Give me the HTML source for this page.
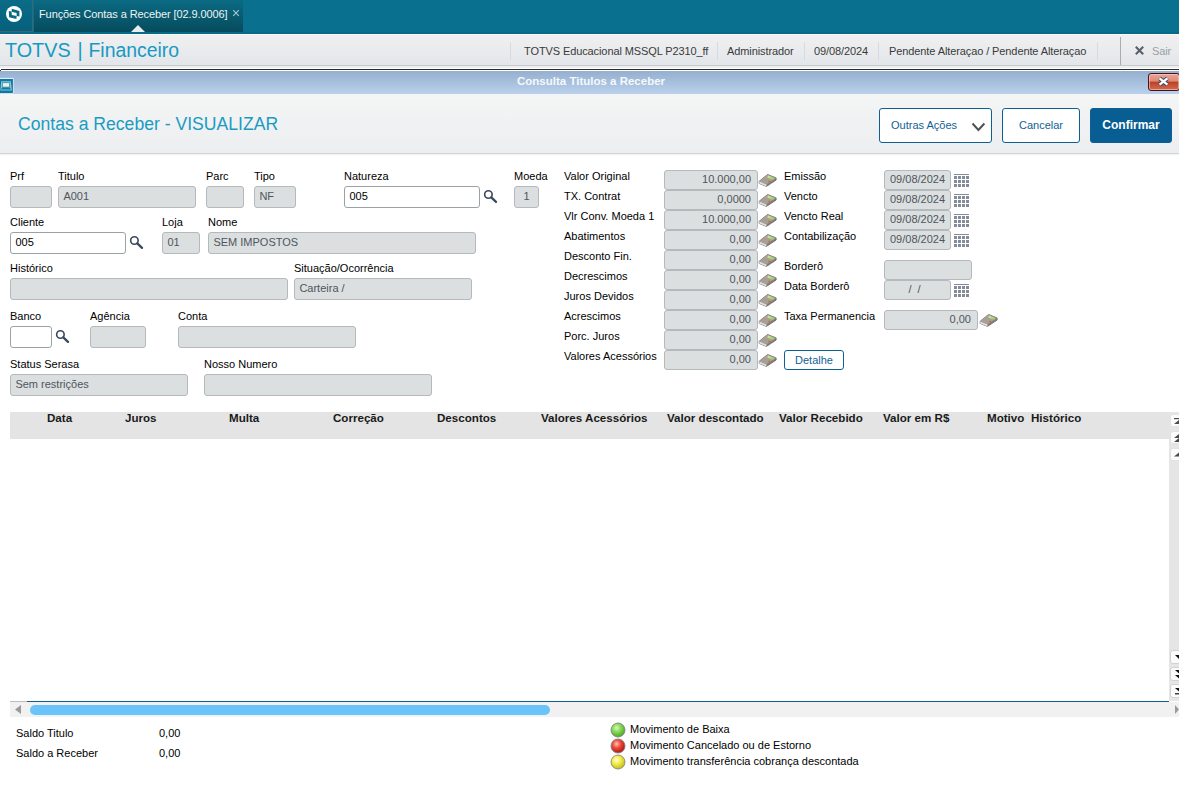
<!DOCTYPE html>
<html><head><meta charset="utf-8">
<style>
*{box-sizing:border-box;margin:0;padding:0}
html,body{width:1179px;height:798px;overflow:hidden;background:#fff;font-family:"Liberation Sans",sans-serif;}
.a{position:absolute}
.t{position:absolute;white-space:pre;font-size:11px;color:#000;line-height:13px}
#top{left:0;top:0;width:1179px;height:34px;background:#0a7090}
#topstrip{left:0;top:32px;width:1179px;height:2px;background:#066a88}
#logo{left:0;top:0;width:33px;height:32px;background:linear-gradient(#0b6c87,#05607c);border-right:1px solid #3e6671;border-bottom:1px solid #3e6671}
#tab{left:34px;top:0;width:209px;height:32px;background:linear-gradient(#0b6b83,#064b5d)}
#wl{left:0;top:34px;width:1179px;height:1px;background:#fbf7f5}
#hdr{left:0;top:35px;width:1179px;height:30px;background:linear-gradient(#f0f0f1,#e3e6ea)}
.sep{position:absolute;width:1px;background:#d8dbdd}
.ht{position:absolute;white-space:pre;font-size:11px;letter-spacing:-0.1px;color:#3a3a3a;line-height:13px;top:45px}
#title{left:0;top:71px;width:1179px;height:23px;background:linear-gradient(#95afcf,#b9d1eb)}
#panel{left:0;top:94px;width:1179px;height:60px;background:linear-gradient(#f4f5f4,#eceef1);border-bottom:1px solid #d3d5d7;box-shadow:0 1px 1px rgba(0,0,0,0.05)}
.btn{position:absolute;border:1px solid #0f5f95;border-radius:3px;background:#fff;color:#0f5f95;font-size:11px;line-height:33px;text-align:center}
.f{position:absolute;height:22px;border:1px solid #b4b9bc;border-radius:3px;background:#dcdfe0;font-size:11px;color:#4e565c;line-height:19px;padding-left:4.4px;white-space:pre}
.fe{background:#fff;border-color:#9aa2a6;color:#000}
.v{position:absolute;height:20px;border:1px solid #b4b9bc;border-radius:3px;background:#dcdfe0;font-size:11px;color:#4e565c;line-height:17px;padding-right:6px;text-align:right;white-space:pre}
.sbb{position:absolute;left:1170px;width:11px;height:13px;background:#fbfbfb;border-radius:3px;border:1px solid #e2e2e2}
.sbd{height:14px;border-color:#d2d2d2}
.gh{position:absolute;white-space:pre;font-size:11.6px;font-weight:bold;color:#1a1a1a;top:411px;line-height:14px}
</style></head><body>
<svg width="0" height="0" style="position:absolute"><defs>
<symbol id="calc" viewBox="0 0 20 15"><defs><linearGradient id="scr" x1="0" y1="0" x2="1" y2="1"><stop offset="0" stop-color="#d6f4a8"/><stop offset="1" stop-color="#86c84c"/></linearGradient></defs><polygon points="1.2,8.25 9.65,1.5 18.1,4.9 18.1,7.05 8.45,13.4 1.2,10.4" fill="#8a7d70" stroke="#6e6e72" stroke-width="0.9" stroke-linejoin="round"/><polygon points="1.2,8.25 8.45,11.3 8.45,13.4 1.2,10.4" fill="#dedce4"/><polygon points="1.2,8.25 9.65,1.5 18.1,4.9 8.45,11.3" fill="#a99f94"/><polygon points="9.95,2.5 16.3,5.2 15.1,7.05 9.35,4.6" fill="url(#scr)"/><circle cx="11.2" cy="8.5" r="0.7" fill="#d0482e"/></symbol>
<symbol id="cal" viewBox="0 0 17 15"><rect x="1" y="1" width="15" height="1" fill="#848c9a"/><g fill="#848c9a"><rect x="1" y="3" width="3" height="3"/><rect x="5" y="3" width="3" height="3"/><rect x="9" y="3" width="3" height="3"/><rect x="13" y="3" width="3" height="3"/><rect x="1" y="7" width="3" height="3"/><rect x="5" y="7" width="3" height="3"/><rect x="9" y="7" width="3" height="3"/><rect x="13" y="7" width="3" height="3"/><rect x="1" y="11" width="3" height="3"/><rect x="5" y="11" width="3" height="3"/><rect x="9" y="11" width="3" height="3"/><rect x="13" y="11" width="3" height="3"/></g></symbol>
<symbol id="srch" viewBox="0 0 16 16"><circle cx="6.4" cy="6.5" r="3.75" fill="none" stroke="#3c4a5e" stroke-width="1.65"/><path d="M9.3 9.4 L14 13.9" stroke="#3c4a5e" stroke-width="2.3" stroke-linecap="round"/></symbol>
</defs></svg>
<div id="top" class="a"></div>
<div id="topstrip" class="a"></div>
<div id="logo" class="a"></div>
<svg class="a" style="left:0;top:0" width="32" height="31" viewBox="0 0 32 31">
<circle cx="14" cy="14" r="8" fill="#fff"/>
<polygon points="11.7,8.8 19.4,10.9 19.4,16.5 16.7,15.9 16.6,12.9 11.7,11.7" fill="#086a86"/>
<polygon points="8.8,11 11.5,11.6 11.8,14.9 16.7,16.1 16.4,19.1 9.1,17.2" fill="#086a86"/>
</svg>
<div id="tab" class="a"></div>
<div class="t" style="left:39px;top:7px;font-size:11px;letter-spacing:-0.1px;color:#eef4f4;line-height:14px">Funções Contas a Receber [02.9.0006]</div>
<svg class="a" style="left:230px;top:8px" width="12" height="12"><path d="M3.2 2.2 L8.8 7.8 M8.8 2.2 L3.2 7.8" stroke="#a9c9d2" stroke-width="1.1"/></svg>
<svg class="a" style="left:130px;top:24px" width="16" height="9"><polygon points="1,8 8,1 15,8" fill="#e9edf0"/></svg>
<div id="wl" class="a"></div>
<div id="hdr" class="a"></div>
<div class="a" style="left:0;top:65px;width:1179px;height:1px;background:#c6cacd"></div>
<div class="a" style="left:0;top:66px;width:1179px;height:2px;background:#eef0f0"></div>
<div class="a" style="left:0;top:68px;width:1179px;height:1px;background:#fff"></div>
<div class="a" style="left:1px;top:69px;width:1178px;height:1px;background:#2c2c2c"></div>
<div class="a" style="left:0;top:70px;width:1179px;height:1px;background:#fdfdfd"></div><div class="a" style="left:0;top:70px;width:1px;height:1px;background:#2c2c2c"></div>
<div class="t" style="left:5px;top:38px;font-size:19.8px;line-height:24px;color:#169ac3">TOTVS</div><div class="t" style="left:77.5px;top:38px;font-size:19.8px;line-height:24px;color:#169ac3">|</div><div class="t" style="left:88.5px;top:38px;font-size:19.4px;line-height:24px;color:#169ac3">Financeiro</div>
<div class="sep" style="left:510px;top:42px;height:18px"></div>
<div class="sep" style="left:717px;top:42px;height:18px"></div>
<div class="sep" style="left:804px;top:42px;height:18px"></div>
<div class="sep" style="left:878px;top:42px;height:18px"></div>
<div class="sep" style="left:1097px;top:42px;height:18px"></div>
<div class="sep" style="left:1120px;top:37px;height:28px;background:#a9adb0"></div>
<div class="ht" style="left:524px">TOTVS Educacional MSSQL P2310_ff</div>
<div class="ht" style="left:727px">Administrador</div>
<div class="ht" style="left:814px">09/08/2024</div>
<div class="ht" style="left:889px">Pendente Alteraçao / Pendente Alteraçao</div>
<svg class="a" style="left:1134px;top:45px" width="12" height="12"><path d="M1.8 1.8 L9.2 9.2 M9.2 1.8 L1.8 9.2" stroke="#5a6068" stroke-width="2.1"/></svg>
<div class="ht" style="left:1152px;color:#9aa0aa">Sair</div>

<div id="title" class="a"></div>
<div class="t" style="left:517px;top:75px;font-size:11.5px;font-weight:bold;color:#f5f8fc">Consulta Titulos a Receber</div>
<svg class="a" style="left:0;top:77px" width="15" height="17"><rect x="0" y="0.9" width="13.6" height="15.6" fill="#eef4fa" opacity="0.85"/><rect x="0" y="2" width="12.9" height="14" fill="#0a7ba3"/><polygon points="1.2,4.2 10.8,4.2 11.9,13.6 0.4,13.6" fill="#8fc6d6"/><rect x="2.1" y="5.2" width="7.8" height="5.4" fill="#3a9cbc"/><rect x="2.9" y="6.1" width="6.2" height="3.6" fill="#f2eeec"/><polygon points="2,10.6 10,10.6 10.9,12.4 1.1,12.4" fill="#0e7ca2"/></svg>
<div class="a" style="left:1148px;top:73px;width:32px;height:18px;border:1px solid #4a1020;border-radius:3px;background:linear-gradient(#eaa595 0%,#dc8a78 45%,#bd3f20 50%,#cf6d55 100%);box-shadow:inset 0 0 0 1px rgba(255,215,200,0.55)"></div>
<svg class="a" style="left:1156px;top:75px" width="16" height="13"><path d="M3.6 3.4 L11.4 9.6 M11.4 3.4 L3.6 9.6" stroke="#3a4660" stroke-width="4.2"/><path d="M3.6 3.4 L11.4 9.6 M11.4 3.4 L3.6 9.6" stroke="#fff" stroke-width="2.4"/></svg>

<div id="panel" class="a"></div>
<div class="t" style="left:18px;top:114px;font-size:17.6px;line-height:20px;color:#1a9bc2">Contas a Receber - VISUALIZAR</div>
<div class="btn" style="left:879px;top:108px;width:113px;height:35px;text-align:left;padding-left:11px">Outras Ações</div>
<svg class="a" style="left:970px;top:121px" width="17" height="12"><path d="M2.5 2.5 L8.4 9 L14.4 2.5" stroke="#4f5155" stroke-width="2" fill="none"/></svg>
<div class="btn" style="left:1002px;top:108px;width:78px;height:35px">Cancelar</div>
<div class="btn" style="left:1090px;top:108px;width:82px;height:35px;background:#085e93;color:#fff;font-weight:bold;font-size:12px">Confirmar</div>

<!-- left form -->
<div class="t" style="left:10px;top:170px">Prf</div>
<div class="t" style="left:58px;top:170px">Titulo</div>
<div class="t" style="left:206px;top:170px">Parc</div>
<div class="t" style="left:254px;top:170px">Tipo</div>
<div class="t" style="left:344px;top:170px">Natureza</div>
<div class="t" style="left:514px;top:170px">Moeda</div>
<div class="f" style="left:10px;top:186px;width:42px"></div>
<div class="f" style="left:58px;top:186px;width:138px">A001</div>
<div class="f" style="left:206px;top:186px;width:38px"></div>
<div class="f" style="left:254px;top:186px;width:42px">NF</div>
<div class="f fe" style="left:344px;top:186px;width:136px">005</div>
<div class="f" style="left:514px;top:186px;width:25px;padding:0;text-align:center">1</div>

<div class="t" style="left:10px;top:216px">Cliente</div>
<div class="t" style="left:162px;top:216px">Loja</div>
<div class="t" style="left:208px;top:216px">Nome</div>
<div class="f fe" style="left:10px;top:232px;width:116px">005</div>
<div class="f" style="left:162px;top:232px;width:38px">01</div>
<div class="f" style="left:208px;top:232px;width:268px">SEM IMPOSTOS</div>

<div class="t" style="left:10px;top:262px">Histórico</div>
<div class="t" style="left:294px;top:262px">Situação/Ocorrência</div>
<div class="f" style="left:10px;top:278px;width:278px"></div>
<div class="f" style="left:294px;top:278px;width:178px">Carteira /</div>

<div class="t" style="left:10px;top:310px">Banco</div>
<div class="t" style="left:90px;top:310px">Agência</div>
<div class="t" style="left:178px;top:310px">Conta</div>
<div class="f fe" style="left:10px;top:326px;width:42px"></div>
<div class="f" style="left:90px;top:326px;width:56px"></div>
<div class="f" style="left:178px;top:326px;width:178px"></div>

<div class="t" style="left:10px;top:358px">Status Serasa</div>
<div class="t" style="left:204px;top:358px">Nosso Numero</div>
<div class="f" style="left:10px;top:374px;width:178px">Sem restrições</div>
<div class="f" style="left:204px;top:374px;width:228px"></div>

<div class="t" style="left:564px;top:170px">Valor Original</div>
<div class="v" style="left:664px;top:170px;width:94px">10.000,00</div>
<svg class="a" style="left:758px;top:173px" width="20" height="15"><use href="#calc"/></svg>
<div class="t" style="left:564px;top:190px">TX. Contrat</div>
<div class="v" style="left:664px;top:190px;width:94px">0,0000</div>
<svg class="a" style="left:758px;top:193px" width="20" height="15"><use href="#calc"/></svg>
<div class="t" style="left:564px;top:210px">Vlr Conv. Moeda 1</div>
<div class="v" style="left:664px;top:210px;width:94px">10.000,00</div>
<svg class="a" style="left:758px;top:213px" width="20" height="15"><use href="#calc"/></svg>
<div class="t" style="left:564px;top:230px">Abatimentos</div>
<div class="v" style="left:664px;top:230px;width:94px">0,00</div>
<svg class="a" style="left:758px;top:233px" width="20" height="15"><use href="#calc"/></svg>
<div class="t" style="left:564px;top:250px">Desconto Fin.</div>
<div class="v" style="left:664px;top:250px;width:94px">0,00</div>
<svg class="a" style="left:758px;top:253px" width="20" height="15"><use href="#calc"/></svg>
<div class="t" style="left:564px;top:270px">Decrescimos</div>
<div class="v" style="left:664px;top:270px;width:94px">0,00</div>
<svg class="a" style="left:758px;top:273px" width="20" height="15"><use href="#calc"/></svg>
<div class="t" style="left:564px;top:290px">Juros Devidos</div>
<div class="v" style="left:664px;top:290px;width:94px">0,00</div>
<svg class="a" style="left:758px;top:293px" width="20" height="15"><use href="#calc"/></svg>
<div class="t" style="left:564px;top:310px">Acrescimos</div>
<div class="v" style="left:664px;top:310px;width:94px">0,00</div>
<svg class="a" style="left:758px;top:313px" width="20" height="15"><use href="#calc"/></svg>
<div class="t" style="left:564px;top:330px">Porc. Juros</div>
<div class="v" style="left:664px;top:330px;width:94px">0,00</div>
<svg class="a" style="left:758px;top:333px" width="20" height="15"><use href="#calc"/></svg>
<div class="t" style="left:564px;top:350px">Valores Acessórios</div>
<div class="v" style="left:664px;top:350px;width:94px">0,00</div>
<svg class="a" style="left:758px;top:353px" width="20" height="15"><use href="#calc"/></svg>
<div class="t" style="left:784px;top:170px">Emissão</div>
<div class="v" style="left:884px;top:170px;width:67px;text-align:center;padding:0">09/08/2024</div>
<svg class="a" style="left:953px;top:173px" width="17" height="15"><use href="#cal"/></svg>
<div class="t" style="left:784px;top:190px">Vencto</div>
<div class="v" style="left:884px;top:190px;width:67px;text-align:center;padding:0">09/08/2024</div>
<svg class="a" style="left:953px;top:193px" width="17" height="15"><use href="#cal"/></svg>
<div class="t" style="left:784px;top:210px">Vencto Real</div>
<div class="v" style="left:884px;top:210px;width:67px;text-align:center;padding:0">09/08/2024</div>
<svg class="a" style="left:953px;top:213px" width="17" height="15"><use href="#cal"/></svg>
<div class="t" style="left:784px;top:230px">Contabilização</div>
<div class="v" style="left:884px;top:230px;width:67px;text-align:center;padding:0">09/08/2024</div>
<svg class="a" style="left:953px;top:233px" width="17" height="15"><use href="#cal"/></svg>
<div class="t" style="left:784px;top:260px">Borderô</div>
<div class="v" style="left:884px;top:260px;width:88px"></div>
<div class="t" style="left:784px;top:280px">Data Borderô</div>
<div class="v" style="left:884px;top:280px;width:67px;text-align:center;padding:0 6px 0 0">  /  /  </div>
<svg class="a" style="left:953px;top:283px" width="17" height="15"><use href="#cal"/></svg>
<div class="t" style="left:784px;top:310px">Taxa Permanencia</div>
<div class="v" style="left:884px;top:310px;width:94px">0,00</div>
<svg class="a" style="left:979px;top:313px" width="20" height="15"><use href="#calc"/></svg>
<div class="a" style="left:784px;top:350px;width:60px;height:20px;border:1px solid #0f5f95;border-radius:3px;background:#fff;color:#0f5f95;font-size:11px;line-height:18px;text-align:center">Detalhe</div>
<svg class="a" style="left:482px;top:188px" width="16" height="16"><use href="#srch"/></svg>
<svg class="a" style="left:128px;top:234px" width="16" height="16"><use href="#srch"/></svg>
<svg class="a" style="left:54px;top:328px" width="16" height="16"><use href="#srch"/></svg>
<!-- grid -->
<div class="a" style="left:10px;top:412px;width:1159px;height:27px;background:#e4e4e4"></div>
<div class="gh" style="left:47px">Data</div>
<div class="gh" style="left:125px">Juros</div>
<div class="gh" style="left:229px">Multa</div>
<div class="gh" style="left:333px">Correção</div>
<div class="gh" style="left:437px">Descontos</div>
<div class="gh" style="left:541px">Valores Acessórios</div>
<div class="gh" style="left:667px">Valor descontado</div>
<div class="gh" style="left:779px">Valor Recebido</div>
<div class="gh" style="left:883px">Valor em R$</div>
<div class="gh" style="left:987px">Motivo</div>
<div class="gh" style="left:1031px">Histórico</div>
<div class="a" style="left:1169px;top:412px;width:10px;height:289px;background:#e5e5e5"></div>
<div class="a" style="left:10px;top:701px;width:17px;height:1px;background:#bdbdbd"></div>
<div class="a" style="left:27px;top:701px;width:1142px;height:1px;background:#0f5f95"></div>
<div class="a" style="left:10px;top:702px;width:1169px;height:15px;background:#f1f1f1"></div>
<div class="a" style="left:30px;top:705px;width:520px;height:10px;border-radius:5px;background:#6ac4fa"></div>
<svg class="a" style="left:14px;top:704px" width="9" height="12"><polygon points="1,5.5 7,1 7,10" fill="#9a9a9a"/></svg>


<div class="sbb" style="top:414px"></div><svg class="a" style="left:1171px;top:414px" width="8" height="13"><rect x="3" y="4" width="5" height="1.2" fill="#4a4a4a"/><polygon points="3,10 8,6 8,10" fill="#4a4a4a"/></svg>
<div class="sbb" style="top:431px"></div><svg class="a" style="left:1171px;top:431px" width="8" height="13"><polygon points="3,7 8,3 8,7" fill="#4a4a4a"/><polygon points="3,11 8,7 8,11" fill="#4a4a4a"/></svg>
<div class="sbb" style="top:448px"></div><svg class="a" style="left:1171px;top:448px" width="8" height="13"><polygon points="3,8.5 8,4.5 8,8.5" fill="#4a4a4a"/></svg>
<div class="sbb sbd" style="top:650px"></div><svg class="a" style="left:1171px;top:650px" width="8" height="13"><polygon points="4,5 8,5 8,9" fill="#111"/></svg>
<div class="sbb sbd" style="top:667px"></div><svg class="a" style="left:1171px;top:667px" width="8" height="13"><polygon points="4,3 8,3 8,6.5" fill="#111"/><polygon points="4,8 8,8 8,11.5" fill="#111"/></svg>
<div class="sbb sbd" style="top:684px"></div><svg class="a" style="left:1171px;top:684px" width="8" height="13"><polygon points="4,4 8,4 8,7.5" fill="#111"/><rect x="4" y="9.2" width="4" height="1.2" fill="#111"/></svg>
<svg class="a" style="left:1174px;top:703px" width="5" height="13"><polygon points="1,2 5,6.5 1,11" fill="#9a9a9a"/></svg>
<svg class="a" style="left:608.5px;top:722px" width="20" height="50">
<defs>
<radialGradient id="gg" cx="40%" cy="35%" r="65%"><stop offset="0" stop-color="#d8f8b8"/><stop offset="0.45" stop-color="#8cd85c"/><stop offset="1" stop-color="#4aa828"/></radialGradient>
<radialGradient id="gr" cx="40%" cy="35%" r="65%"><stop offset="0" stop-color="#ffc0b8"/><stop offset="0.45" stop-color="#ec4c3c"/><stop offset="1" stop-color="#b01810"/></radialGradient>
<radialGradient id="gy" cx="40%" cy="35%" r="65%"><stop offset="0" stop-color="#ffffd8"/><stop offset="0.45" stop-color="#f2ee4c"/><stop offset="1" stop-color="#c4bc20"/></radialGradient>
</defs>
<circle cx="9" cy="8" r="7" fill="url(#gg)" stroke="#7a8a7a" stroke-width="0.9"/>
<circle cx="9" cy="24" r="7" fill="url(#gr)" stroke="#8a7a7a" stroke-width="0.9"/>
<circle cx="9" cy="40" r="7" fill="url(#gy)" stroke="#8a8a7a" stroke-width="0.9"/>
</svg>
<div class="t" style="left:16px;top:727px">Saldo Titulo</div>
<div class="t" style="left:159px;top:727px">0,00</div>
<div class="t" style="left:16px;top:747px">Saldo a Receber</div>
<div class="t" style="left:159px;top:747px">0,00</div>
<div class="t" style="left:630px;top:723px">Movimento de Baixa</div>
<div class="t" style="left:630px;top:739px">Movimento Cancelado ou de Estorno</div>
<div class="t" style="left:630px;top:755px">Movimento transferência cobrança descontada</div>
</body></html>
